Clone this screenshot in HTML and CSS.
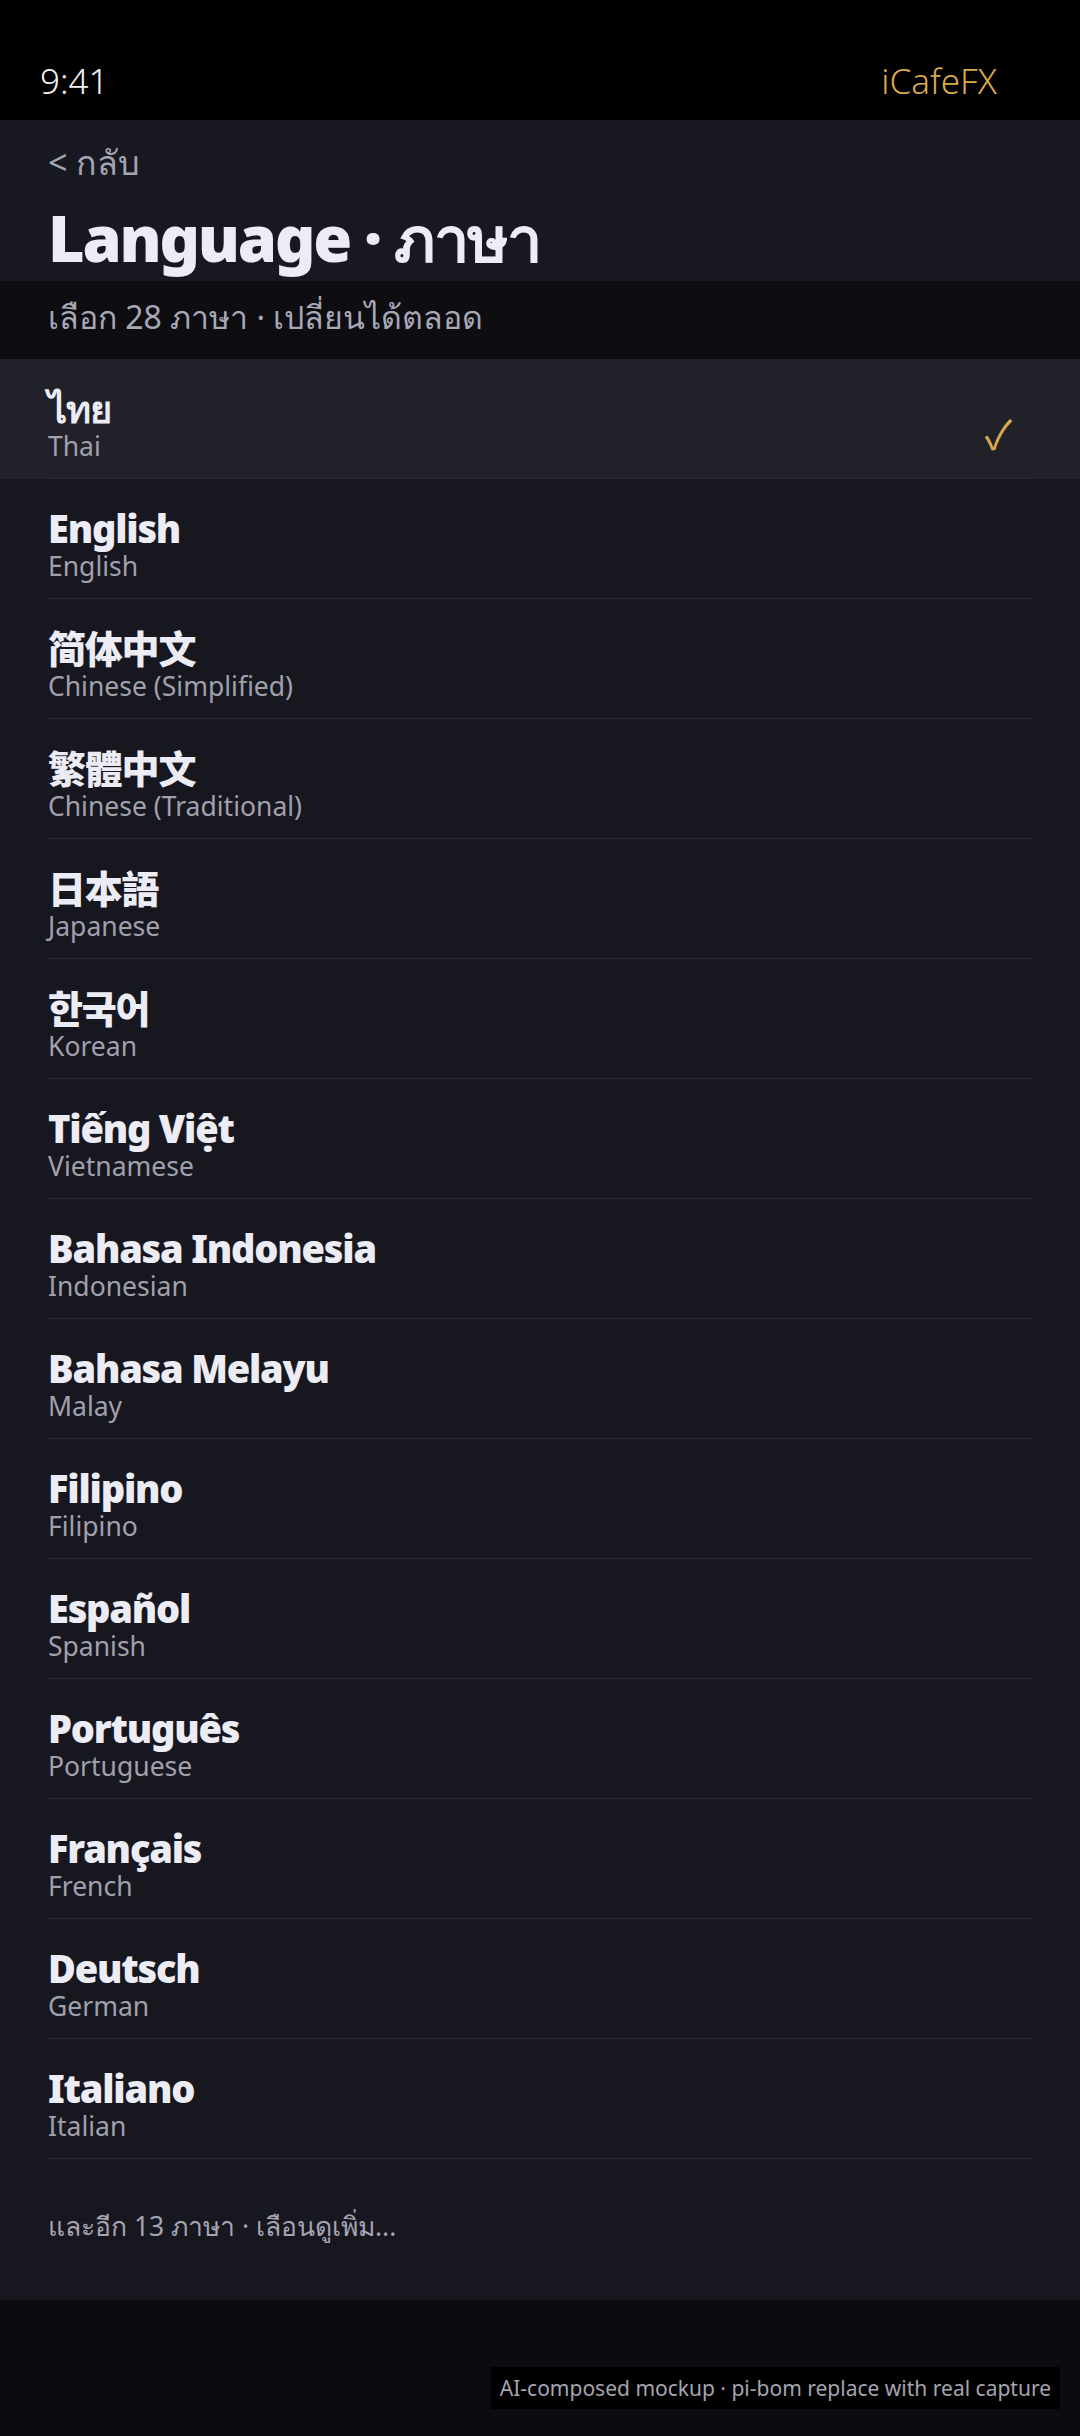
FILE: index.html
```html
<!DOCTYPE html>
<html lang="th">
<head>
<meta charset="UTF-8">
<meta name="viewport" content="width=device-width, initial-scale=1.0">
<title>Language · ภาษา</title>
<link rel="stylesheet" href="styles.css">
</head>
<body>
<div class="screen">
    <div class="status-bar">
        <span class="time">9:41</span>
        <span class="brand">iCafeFX</span>
    </div>
    <div class="page-head">
        <a class="back" href="#">&lt; กลับ</a>
        <h1>Language · ภาษา</h1>
    </div>
    <div class="subtitle">เลือก 28 ภาษา · เปลี่ยนได้ตลอด</div>
    <ul class="lang-list">
        <li class="lang-row selected">
            <div class="lang-inner">
                <div class="lang-text">
                    <p class="native">ไทย</p>
                    <p class="english">Thai</p>
                </div>
                <span class="check">✓</span>
            </div>
        </li>
        <li class="lang-row"><div class="lang-inner"><div class="lang-text"><p class="native">English</p><p class="english">English</p></div></div></li>
        <li class="lang-row"><div class="lang-inner"><div class="lang-text"><p class="native">简体中文</p><p class="english">Chinese (Simplified)</p></div></div></li>
        <li class="lang-row"><div class="lang-inner"><div class="lang-text"><p class="native">繁體中文</p><p class="english">Chinese (Traditional)</p></div></div></li>
        <li class="lang-row"><div class="lang-inner"><div class="lang-text"><p class="native">日本語</p><p class="english">Japanese</p></div></div></li>
        <li class="lang-row"><div class="lang-inner"><div class="lang-text"><p class="native">한국어</p><p class="english">Korean</p></div></div></li>
        <li class="lang-row"><div class="lang-inner"><div class="lang-text"><p class="native">Tiếng Việt</p><p class="english">Vietnamese</p></div></div></li>
        <li class="lang-row"><div class="lang-inner"><div class="lang-text"><p class="native">Bahasa Indonesia</p><p class="english">Indonesian</p></div></div></li>
        <li class="lang-row"><div class="lang-inner"><div class="lang-text"><p class="native">Bahasa Melayu</p><p class="english">Malay</p></div></div></li>
        <li class="lang-row"><div class="lang-inner"><div class="lang-text"><p class="native">Filipino</p><p class="english">Filipino</p></div></div></li>
        <li class="lang-row"><div class="lang-inner"><div class="lang-text"><p class="native">Español</p><p class="english">Spanish</p></div></div></li>
        <li class="lang-row"><div class="lang-inner"><div class="lang-text"><p class="native">Português</p><p class="english">Portuguese</p></div></div></li>
        <li class="lang-row"><div class="lang-inner"><div class="lang-text"><p class="native">Français</p><p class="english">French</p></div></div></li>
        <li class="lang-row"><div class="lang-inner"><div class="lang-text"><p class="native">Deutsch</p><p class="english">German</p></div></div></li>
        <li class="lang-row"><div class="lang-inner"><div class="lang-text"><p class="native">Italiano</p><p class="english">Italian</p></div></div></li>
    </ul>
    <div class="more">และอีก 13 ภาษา · เลือนดูเพิ่ม...</div>
    <div class="bottom-area"></div>
    <div class="mock-note">AI-composed mockup · pi-bom replace with real capture</div>
</div>
</body>
</html>
```

FILE: styles.css
```css
body {
    margin: 0;
    padding: 0;
    background: #0c0c10;
    font-family: 'Noto Sans', 'Noto Sans CJK SC', sans-serif;
    color: #ececf4;
}
.screen {
    position: relative;
    width: 1080px;
    min-height: 2436px;
    background: #0c0c10;
}
.status-bar {
    height: 120px;
    box-sizing: border-box;
    background: #000;
    display: flex;
    justify-content: space-between;
    padding: 56px 83px 0 40px;
    font-size: 35px;
    line-height: 50px;
    font-weight: 300;
}
.time {
    color: #f2f2f6;
}
.brand {
    color: #d9aa4c;
}
.page-head {
    background: #181820;
    height: 161px;
    box-sizing: border-box;
    padding: 20px 48px 0;
}
.back {
    display: block;
    color: #a4a4b2;
    text-decoration: none;
    font-size: 34px;
    line-height: 44px;
}
h1 {
    margin: 16px 0 0;
    font-size: 63px;
    line-height: 76px;
    font-weight: 900;
    letter-spacing: -2.2px;
    color: #ececf5;
}
.subtitle {
    background: #0d0d12;
    height: 78px;
    box-sizing: border-box;
    padding: 13px 48px 0;
    font-size: 32px;
    line-height: 46px;
    color: #a8a8b6;
}
.lang-list {
    list-style: none;
    margin: 0;
    padding: 0;
    background: #17171f;
}
.lang-row.selected {
    background: #21212a;
}
.lang-inner {
    margin: 0 47px 0 48px;
    height: 120px;
    box-sizing: border-box;
    border-bottom: 1px solid #2a2a33;
    display: flex;
    align-items: center;
    justify-content: space-between;
}
.lang-text {
    margin-top: 13px;
}
.lang-text p {
    margin: 0;
}
.native {
    font-size: 38px;
    line-height: 42px;
    font-weight: 900;
    letter-spacing: -1.2px;
    color: #ececf5;
}
.english {
    font-size: 26.5px;
    line-height: 34px;
    color: #a0a0ae;
}
.check {
    color: #d9aa4c;
    font-size: 40px;
    line-height: 50px;
    margin: 30px 21px 0 0;
}
.more {
    background: #17171f;
    height: 141px;
    box-sizing: border-box;
    padding: 47px 48px 0;
    font-size: 26.5px;
    line-height: 40px;
    color: #a4a4b2;
}
.bottom-area {
    height: 136px;
    background: #0c0c10;
}
.mock-note {
    position: absolute;
    right: 20px;
    bottom: 27px;
    background: #000;
    color: #a4a4b0;
    font-size: 21px;
    line-height: 42px;
    padding: 0 9px;
}
```
